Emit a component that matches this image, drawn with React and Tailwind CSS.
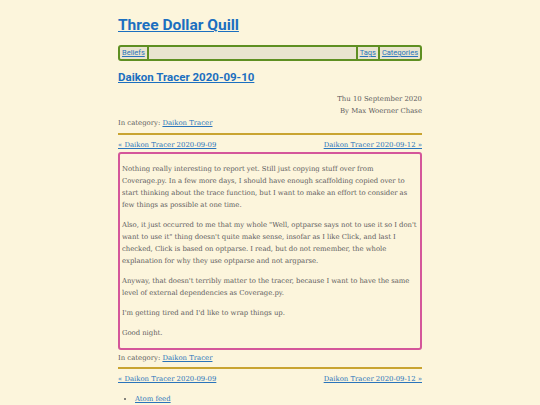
import React from "react";

const serif = { fontFamily: '"DejaVu Serif", serif' };
const sans = { fontFamily: 'Roboto, "Noto Sans", sans-serif' };

function PrevNext({ className = "" }) {
  return (
    <div className={"flex justify-between text-[6.9px] leading-[12px] " + className} style={serif}>
      <a className="text-[#2a74bb] underline">« Daikon Tracer 2020-09-09</a>
      <a className="text-[#2a74bb] underline">Daikon Tracer 2020-09-12 »</a>
    </div>
  );
}

function Category({ className = "" }) {
  return (
    <div className={"text-[6.9px] leading-[12px] text-[#5c5c5c] " + className} style={serif}>
      In category: <a className="text-[#2a74bb] underline">Daikon Tracer</a>
    </div>
  );
}

function Para({ lines }) {
  return (
    <p className="my-[8px] whitespace-nowrap">
      {lines.map((l, i) => (
        <React.Fragment key={i}>
          {l}
          {i < lines.length - 1 && <br />}
        </React.Fragment>
      ))}
    </p>
  );
}

export default function App() {
  return (
    <div className="min-h-screen w-full bg-[#fcf5dc]">
      <div className="mx-auto w-[304px] pt-[16px]">
        <h1 className="text-[15.5px] leading-[18px] font-bold" style={sans}>
          <a className="text-[#1b6fc0] underline">Three Dollar Quill</a>
        </h1>
        <nav
          className="mt-[11px] flex h-[16px] items-stretch rounded-[3px] border-2 border-[#5e8f22] bg-[#e9e4cf] text-[7.5px] leading-[12px]"
          style={sans}
        >
          <a className="px-[2px] text-[#2a74bb] underline">Beliefs</a>
          <span className="w-[2px] bg-[#5e8f22]" />
          <span className="flex-1" />
          <span className="w-[2px] bg-[#5e8f22]" />
          <a className="px-[2px] text-[#2a74bb] underline">Tags</a>
          <span className="w-[2px] bg-[#5e8f22]" />
          <a className="px-[2px] text-[#2a74bb] underline">Categories</a>
        </nav>
        <h2 className="mt-[8px] text-[11.5px] leading-[16px] font-bold" style={sans}>
          <a className="text-[#1b6fc0] underline">Daikon Tracer 2020-09-10</a>
        </h2>
        <div className="mt-[8px] text-right text-[6.9px] leading-[12px] text-[#5c5c5c]" style={serif}>
          <div>Thu 10 September 2020</div>
          <div>By Max Woerner Chase</div>
        </div>
        <Category />
        <div className="mt-[4px] h-[2px] bg-[#c9a431]" />
        <PrevNext className="mt-[4px]" />
        <div
          className="mt-[1px] rounded-[3px] border-2 border-[#d4569a] px-[2px] py-[1px] text-[6.9px] leading-[12px] tracking-[-0.04px] text-[#5c5c5c]"
          style={serif}
        >
          <Para
            lines={[
              "Nothing really interesting to report yet. Still just copying stuff over from",
              "Coverage.py. In a few more days, I should have enough scaffolding copied over to",
              "start thinking about the trace function, but I want to make an effort to consider as",
              "few things as possible at one time.",
            ]}
          />
          <Para
            lines={[
              "Also, it just occurred to me that my whole \"Well, optparse says not to use it so I don't",
              "want to use it\" thing doesn't quite make sense, insofar as I like Click, and last I",
              "checked, Click is based on optparse. I read, but do not remember, the whole",
              "explanation for why they use optparse and not argparse.",
            ]}
          />
          <Para
            lines={[
              "Anyway, that doesn't terribly matter to the tracer, because I want to have the same",
              "level of external dependencies as Coverage.py.",
            ]}
          />
          <Para lines={["I'm getting tired and I'd like to wrap things up."]} />
          <Para lines={["Good night."]} />
        </div>
        <Category className="mt-[2px]" />
        <div className="mt-[3px] h-[2px] bg-[#c9a431]" />
        <PrevNext className="mt-[4px]" />
        <ul className="mt-[8px] list-disc pl-[17px] text-[6.9px] leading-[12px] text-[#5c5c5c]" style={serif}>
          <li>
            <a className="text-[#2a74bb] underline">Atom feed</a>
          </li>
        </ul>
      </div>
    </div>
  );
}
